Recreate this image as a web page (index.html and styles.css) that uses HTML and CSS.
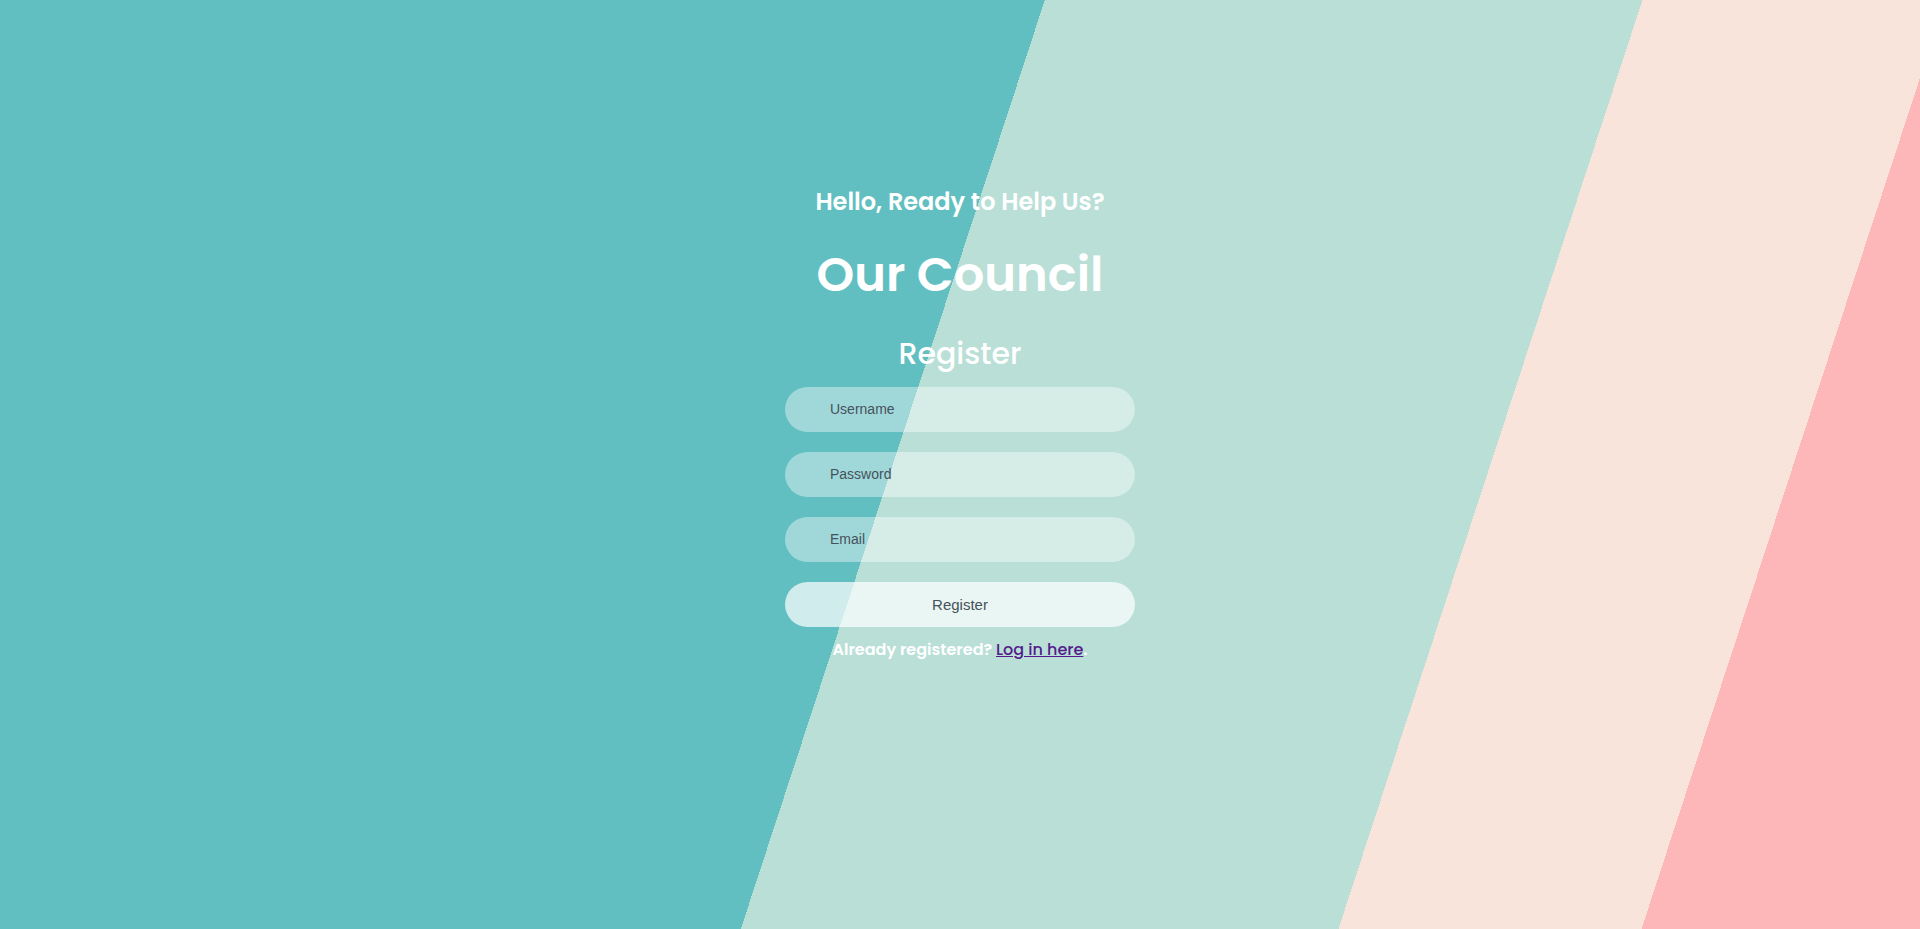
FILE: index.html
```html
<!DOCTYPE html>
<html lang="en">
<head>
<meta charset="utf-8">
<title>Our Council - Register</title>
<link rel="stylesheet" href="styles.css">
</head>
<body>
<main class="page">
  <section class="panel">
    <h3 class="greeting">Hello, Ready to Help Us?</h3>
    <h1 class="title">Our Council</h1>
    <h2 class="subtitle">Register</h2>
    <form class="form">
      <input class="field" type="text" placeholder="Username">
      <input class="field" type="password" placeholder="Password">
      <input class="field" type="email" placeholder="Email">
      <button class="btn" type="button">Register</button>
    </form>
    <p class="note">Already registered? <a class="link" href="#">Log in here</a>.</p>
  </section>
</main>
</body>
</html>
```

FILE: styles.css
```css
html, body {
  margin: 0;
  padding: 0;
  height: 100%;
}
body {
  font-family: "Poppins", "Open Sans", sans-serif;
  overflow: hidden;
}
.page {
  height: 929px;
  background: linear-gradient(108.12deg,
    #61bfc1 0px, #61bfc1 993px,
    #b9dfd7 993px, #b9dfd7 1561px,
    #f8e4db 1561px, #f8e4db 1849px,
    #fdb7b8 1849px, #fdb7b8 100%);
  display: flex;
  justify-content: center;
}
.panel {
  width: 350px;
  padding-top: 187px;
  display: flex;
  flex-direction: column;
  align-items: center;
  color: #fff;
}
.greeting {
  margin: 0;
  font-size: 24px;
  line-height: 30px;
  font-weight: 600;
}
.title {
  margin: 28px 0 0;
  font-size: 48px;
  line-height: 60px;
  font-weight: 600;
}
.subtitle {
  margin: 31px 0 0;
  font-size: 30px;
  line-height: 36px;
  font-weight: 500;
}
.form {
  margin-top: 15px;
  width: 350px;
  display: flex;
  flex-direction: column;
  gap: 20px;
}
.field {
  box-sizing: border-box;
  height: 45px;
  width: 100%;
  border: none;
  outline: none;
  border-radius: 23px;
  background: rgba(255, 255, 255, 0.4);
  padding: 0 0 1px 45px;
  font-family: "Liberation Sans", Arial, sans-serif;
  font-size: 14px;
  color: #46525a;
}
.field::placeholder {
  color: #46525a;
  opacity: 1;
}
.btn {
  height: 45px;
  width: 100%;
  border: none;
  border-radius: 23px;
  background: rgba(255, 255, 255, 0.7);
  font-family: "Liberation Sans", Arial, sans-serif;
  font-size: 15px;
  color: #46525a;
  cursor: pointer;
}
.note {
  margin: 11px 0 0;
  font-size: 16px;
  line-height: 24px;
  font-weight: 600;
  white-space: nowrap;
}
.link {
  color: #551a8b;
  font-weight: 500;
}
```
